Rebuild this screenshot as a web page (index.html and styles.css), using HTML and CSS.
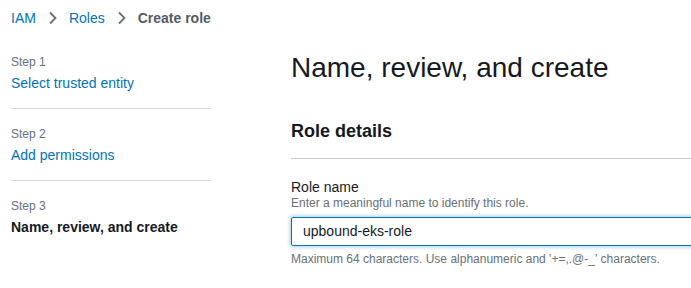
FILE: index.html
```html
<!DOCTYPE html>
<html>
<head>
<meta charset="utf-8">
<link rel="stylesheet" href="styles.css">
</head>
<body>
<nav class="crumbs">
  <a class="crumb-link">IAM</a>
  <svg class="chev" width="10" height="14" viewBox="0 0 10 14"><path d="M2 1.5 L7.5 7 L2 12.5" fill="none" stroke="#687078" stroke-width="1.8"/></svg>
  <a class="crumb-link">Roles</a>
  <svg class="chev" width="10" height="14" viewBox="0 0 10 14"><path d="M2 1.5 L7.5 7 L2 12.5" fill="none" stroke="#687078" stroke-width="1.8"/></svg>
  <span class="crumb-current">Create role</span>
</nav>
<div class="layout">
  <ul class="steps">
    <li class="step">
      <div class="step-num">Step 1</div>
      <a class="step-link">Select trusted entity</a>
    </li>
    <li class="step">
      <div class="step-num">Step 2</div>
      <a class="step-link">Add permissions</a>
    </li>
    <li class="step">
      <div class="step-num">Step 3</div>
      <span class="step-active">Name, review, and create</span>
    </li>
  </ul>
  <main class="content">
    <h1 class="title">Name, review, and create</h1>
    <section class="panel">
      <h2 class="panel-title">Role details</h2>
      <div class="field">
        <label class="label">Role name</label>
        <div class="desc">Enter a meaningful name to identify this role.</div>
        <div class="input">upbound-eks-role</div>
        <div class="hint">Maximum 64 characters. Use alphanumeric and '+=,.@-_' characters.</div>
      </div>
    </section>
  </main>
</div>
</body>
</html>
```
FILE: styles.css
```css
* { box-sizing: border-box; }
html, body { margin: 0; padding: 0; background: #fff; }
body {
  font-family: "Liberation Sans", Arial, sans-serif;
  color: #16191f;
  width: 691px;
  height: 288px;
  overflow: hidden;
}
.crumbs {
  display: flex;
  align-items: center;
  padding: 9px 0 0 11px;
  height: 27px;
  font-size: 14px;
  line-height: 18px;
}
.crumb-link { color: #0073bb; }
.chev { margin: 0 11px 0 12px; }
.crumb-current { color: #545b64; font-weight: bold; }
.layout {
  display: flex;
  padding-top: 18px;
}
.steps {
  list-style: none;
  margin: 0;
  padding: 9px 0 0 11px;
  width: 211px;
  flex: none;
}
.step {
  padding: 0 0 15px;
  border-bottom: 1px solid #d5dbdb;
  margin-bottom: 17px;
}
.step:last-child { border-bottom: none; }
.step-num {
  font-size: 12px;
  line-height: 16px;
  color: #687078;
  margin-bottom: 3px;
}
.step-link {
  display: block;
  font-size: 14px;
  line-height: 20px;
  color: #0073bb;
}
.step-active {
  display: block;
  font-size: 14px;
  line-height: 20px;
  font-weight: bold;
  color: #16191f;
}
.content {
  margin-left: 80px;
  flex: 1;
  min-width: 0;
}
.title {
  margin: 0;
  font-size: 28px;
  line-height: 36px;
  font-weight: normal;
  color: #16191f;
  padding-top: 5px;
}
.panel { margin-top: 34px; }
.panel-title {
  margin: 0;
  font-size: 18px;
  line-height: 22px;
  font-weight: bold;
  padding-bottom: 16px;
  border-bottom: 1px solid #c9cccd;
  color: #16191f;
  margin-right: -20px;
}
.field { padding-top: 19px; }
.label {
  display: block;
  font-size: 14px;
  line-height: 18px;
  color: #16191f;
}
.desc {
  font-size: 12px;
  line-height: 15px;
  color: #687078;
}
.input {
  margin-top: 6px;
  width: 420px;
  height: 29px;
  border: 1px solid #0073bb;
  border-radius: 2px;
  box-shadow: 0 0 4px 1px rgba(0, 115, 187, 0.35);
  font-size: 14px;
  line-height: 27px;
  padding-left: 11px;
  color: #16191f;
}
.hint {
  margin-top: 6px;
  font-size: 12px;
  line-height: 15px;
  color: #687078;
}
```
